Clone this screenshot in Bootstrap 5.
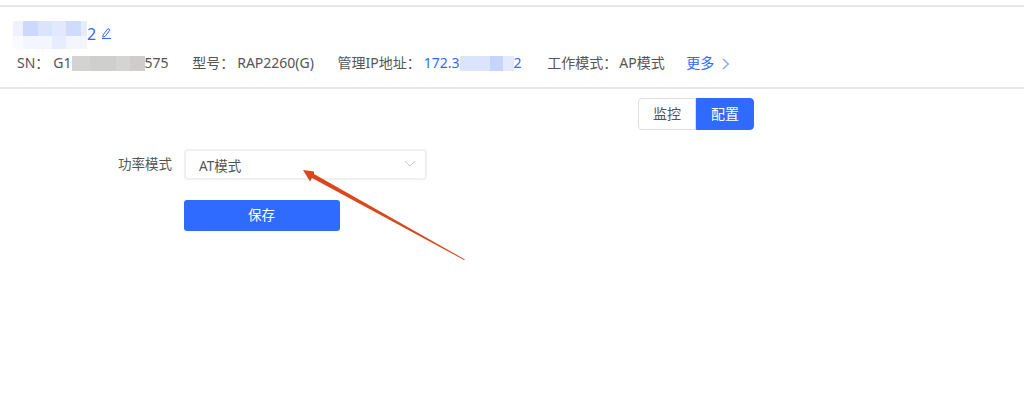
<!DOCTYPE html>
<html lang="zh">
<head>
<meta charset="utf-8">
<title>功率模式</title>
<link href="https://cdn.jsdelivr.net/npm/bootstrap@5.3.0/dist/css/bootstrap.min.css" rel="stylesheet">
<style>
html,body{height:407px;overflow:hidden;background:#fff;}
body{font-family:"Noto Sans","Noto Sans CJK SC",sans-serif;font-size:14px;color:#555;position:relative;}
.hdr-box{border-top:2px solid #e6e6e6;margin-top:5px;height:84px;border-bottom:2px solid #e9e9ec;padding-top:12px;}
.name-row{height:31px;padding-left:13px;color:#2f6bff;font-size:16px;line-height:30px;}
.blur-wrap{width:74px;height:28px;position:relative;margin-top:2px;flex:none;}
.blur-a{position:absolute;left:0;top:0;width:74px;height:15px;background:linear-gradient(90deg,#eef2fe 0 14%,#ccd9fd 14% 34%,#dbe4fd 34% 53%,#e2e9fe 53% 72%,#d0dcfd 72% 92%,#e6ecfe 92%);}
.blur-b{position:absolute;left:0;top:15px;width:74px;height:13px;background:linear-gradient(90deg,#fafbff 0 14%,#f3f6ff 14% 53%,#e8edfe 53% 72%,#f3f6ff 72%);}
.info-row{padding-left:17px;height:26px;line-height:26px;white-space:nowrap;}
.itm{margin-right:20px;}
.gap-k{display:inline-block;width:3px;}
.gap-t{display:inline-block;width:2px;}
.gap-s{display:inline-block;width:4px;}
.blur-gray{display:inline-block;width:73px;height:15px;background:linear-gradient(90deg,#d4d3d1 0 25%,#cfd0cd 25% 60%,#d4d4d2 60% 80%,#cecdcb 80%);vertical-align:-3px;}
.blur-blue{display:inline-block;width:54px;height:15px;background:linear-gradient(90deg,#dbe4fd 0 55%,#c7d5fc 55% 80%,#e3eafe 80%);vertical-align:-3px;}
.lnk{color:#2f6bff;}
.itm-wide{margin-right:22px;}
.itm-last{margin-right:18px;}
.seg{padding-right:270px;padding-top:9px;}
.seg-btn{width:58px;height:32px;font-size:14px;padding:0;line-height:30px;}
.seg-l{background:#fff;color:#555;border:1px solid #dcdfe6;border-radius:4px 0 0 4px;}
.seg-r{background:#2f6bff;color:#fff;border:1px solid #2f6bff;border-radius:0 4px 4px 0;}
.form-zone{padding-top:19px;font-size:13.5px;}
.lbl{width:172px;text-align:right;line-height:30px;}
.sel{width:243px;height:31px;margin-left:12px;border:2px solid #eef0f6;border-radius:4px;padding:0 13px;line-height:30px;position:relative;color:#555;}
.sel svg{position:absolute;right:9px;top:9px;}
.save{width:156px;height:31px;margin-left:183.500px;margin-top:20px;background:#2f6bff;color:#fff;border:none;border-radius:3px;font-size:13.500px;padding:0;}
.arrow{position:absolute;left:0;top:0;pointer-events:none;}
</style>
</head>
<body>
<div class="hdr-box">
  <div class="name-row d-flex align-items-start">
    <div class="blur-wrap"><div class="blur-a"></div><div class="blur-b"></div></div><span class="ms-0">2</span>
    <svg class="ms-1 mt-2" width="12" height="13" viewBox="0 0 12 13" fill="none" stroke="#2f6bff" stroke-width="1"><path d="M3 8 8 1.500l2 1.500-5 6.500-2.200.7z"/><path d="M2 11.500h9"/></svg>
  </div>
  <div class="info-row">
    <span class="itm">SN：<span class="gap-s"></span>G1<span class="blur-gray"></span>575</span>
    <span class="itm">型号：<span class="gap-k"></span>RAP2260(G)</span>
    <span class="itm itm-wide">管理IP地址：<span class="gap-k"></span><span class="lnk">172.3<span class="blur-blue"></span>2</span></span>
    <span class="itm itm-last">工作模式：<span class="gap-t"></span>AP模式</span>
    <span class="lnk">更多<svg class="ms-2" width="8" height="12" viewBox="0 0 8 12" fill="none" stroke="#7f9ff5" stroke-width="1.200"><path d="M1 1l5.500 5L1 11"/></svg></span>
  </div>
</div>
<div class="seg d-flex justify-content-end">
  <button type="button" class="seg-btn seg-l">监控</button>
  <button type="button" class="seg-btn seg-r">配置</button>
</div>
<div class="form-zone">
  <div class="d-flex">
    <div class="lbl">功率模式</div>
    <div class="sel">AT模式
      <svg width="12" height="8" viewBox="0 0 12 8" fill="none" stroke="#c8c9cc" stroke-width="1"><path d="M1 1l5 5 5-5"/></svg>
    </div>
  </div>
  <button type="button" class="save d-block">保存</button>
</div>
<svg class="arrow" width="1024" height="407" viewBox="0 0 1024 407"><path d="M303 170 L314 171.500 L314 174 L465 259.500 L464 260 L312 178 L310 181.500 Z" fill="#d9481c"/></svg>
<script src="https://cdn.jsdelivr.net/npm/bootstrap@5.3.0/dist/js/bootstrap.bundle.min.js"></script>
</body>
</html>
